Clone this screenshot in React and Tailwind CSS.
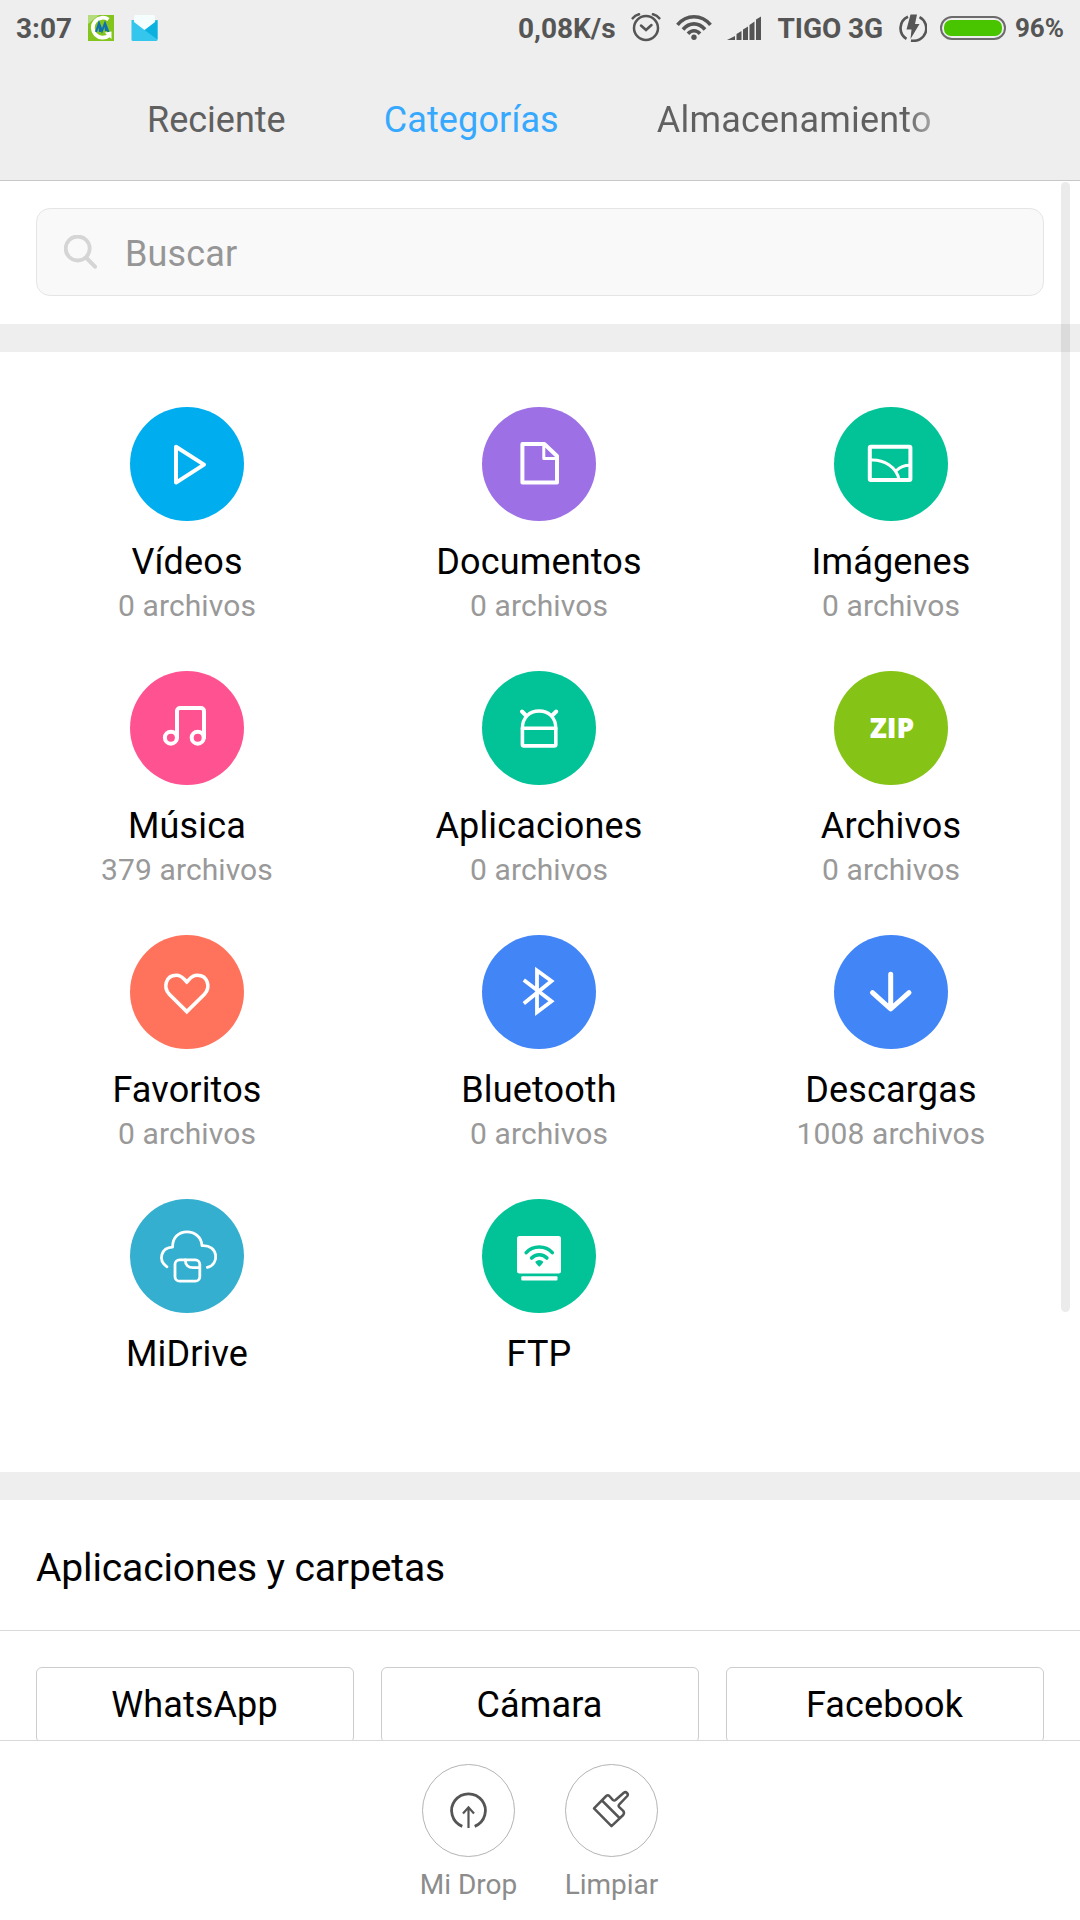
import React from 'react';

const categories = [
  { name: 'Vídeos', count: '0 archivos', color: 'bg-[#00aeef]', icon: 'video' },
  { name: 'Documentos', count: '0 archivos', color: 'bg-[#9d70e6]', icon: 'document' },
  { name: 'Imágenes', count: '0 archivos', color: 'bg-[#02c398]', icon: 'image' },
  { name: 'Música', count: '379 archivos', color: 'bg-[#ff5391]', icon: 'music' },
  { name: 'Aplicaciones', count: '0 archivos', color: 'bg-[#02c398]', icon: 'app' },
  { name: 'Archivos', count: '0 archivos', color: 'bg-[#85c317]', icon: 'zip' },
  { name: 'Favoritos', count: '0 archivos', color: 'bg-[#ff735c]', icon: 'heart' },
  { name: 'Bluetooth', count: '0 archivos', color: 'bg-[#4185f7]', icon: 'bluetooth' },
  { name: 'Descargas', count: '1008 archivos', color: 'bg-[#4185f7]', icon: 'download' },
  { name: 'MiDrive', count: '', color: 'bg-[#35afcf]', icon: 'drive' },
  { name: 'FTP', count: '', color: 'bg-[#02c398]', icon: 'ftp' },
];

const folders = ['WhatsApp', 'Cámara', 'Facebook'];

const icons = {
  video: <path d="M46 39.8V75.6L74 57.6Z" />,
  document: (
    <>
      <path d="M40.4 37H62.3L75 49V75.4H40.4Z" />
      <path d="M61.8 37V51.6H75" strokeWidth="3" />
    </>
  ),
  image: (
    <>
      <rect x="35.8" y="39.7" width="40.6" height="33.2" rx="1" />
      <path d="M36 53C50 52 62.5 60 65 72.5M62.5 63.5C66 59.8 70 58.3 76 58.3" strokeWidth="3" />
    </>
  ),
  music: (
    <>
      <path d="M47 66.7V40A3 3 0 0 1 50 37H71A3 3 0 0 1 74 40V66.7" />
      <circle cx="40.9" cy="66.7" r="6" />
      <circle cx="67.7" cy="66.7" r="6" />
    </>
  ),
  app: (
    <>
      <path d="M40.4 57.3V73.4A1.5 1.5 0 0 0 41.9 74.9H72.3A1.5 1.5 0 0 0 73.8 73.4V57.3Z" strokeWidth="3.6" />
      <path d="M40.4 57.3C40.4 46.5 47.5 40 57.1 40S73.8 46.5 73.8 57.3" strokeWidth="3.4" />
      <path d="M40 40.5L44 44.5M74.2 40.5L70.2 44.5" />
    </>
  ),
  heart: (
    <path
      d="M56.8 76.6L39.3 59.3C33 52.5 35.5 40.4 46.3 40.3C51.8 40.3 53.5 43.5 56.8 47C60.2 43.5 61.8 40.3 67.3 40.3C78.2 40.4 80.7 52.5 74.4 59.3Z"
      strokeWidth="3.6"
      strokeLinejoin="miter"
    />
  ),
  bluetooth: (
    <path
      d="M41.8 45L69.5 66.2L55 77.2V35.5L69.5 46L41.8 68.5"
      strokeWidth="3.8"
      strokeLinecap="butt"
      strokeLinejoin="miter"
    />
  ),
  download: <path d="M56.7 39.3V73.5M38.5 57.7L56.7 74L75 57.7" strokeWidth="5" />,
  drive: (
    <g strokeWidth="2.8">
      <path d="M37 67.8C27.5 61.5 31 48.5 42.6 48.1C42.3 38.5 49 32.8 56.9 32.8C65 32.8 71.5 38.3 72 46.6C88.5 45.5 90 65.5 77.3 68.4" />
      <rect x="45" y="60.8" width="24.8" height="21.4" rx="4.5" />
      <path d="M55.3 61C55.3 66 58.5 68.7 63 68.7H69.5" />
    </g>
  ),
  ftp: (
    <g stroke="none">
      <rect x="35" y="37" width="44" height="37.5" rx="2.5" fill="white" />
      <rect x="39.3" y="77.2" width="36.2" height="4.2" rx="1" fill="white" />
      <g stroke="#02c398" strokeWidth="3.6">
        <path d="M44.2 53.6C51 46.2 63.5 46.2 70.3 53.6" />
        <path d="M49.6 59C53.5 54.7 61 54.7 64.9 59" />
      </g>
      <path d="M53.3 62.8Q57.3 59 61.3 62.8Q61 64.5 57.3 67.7Q53.5 64.5 53.3 62.8Z" fill="#02c398" />
    </g>
  ),
};

const CategoryIcon = ({ icon }) => {
  if (icon === 'zip') {
    return (
      <span className="pb-0.5 pl-0.5 font-['Open_Sans',sans-serif] text-[28px] leading-[38px] font-extrabold text-white">
        ZIP
      </span>
    );
  }
  return (
    <svg
      className="size-[114px]"
      viewBox="0 0 114 114"
      fill="none"
      stroke="white"
      strokeWidth="4"
      strokeLinecap="round"
      strokeLinejoin="round"
    >
      {icons[icon]}
    </svg>
  );
};

const StatusBar = () => (
  <div className="flex h-[56px] items-center px-[16px] text-[28px] font-bold text-[#555555]">
    <span className="w-[72px] pt-[2px]">3:07</span>
    <svg className="h-[26px] w-[26px] shrink-0" viewBox="0 0 26 26">
      <rect width="26" height="26" fill="#83c41d" />
      <path d="M0 0H11L0 9Z" fill="#b5dc7c" />
      <path d="M20.5 4.5A10 10 0 1 0 21 20.5" fill="none" stroke="white" strokeWidth="3.8" />
      <path d="M16.5 17.5L23.5 16.5V24Z" fill="white" />
      <path d="M8 17L11 8L14 16L17 8L20.5 17M11 8L12 17M17 8L18 16" fill="none" stroke="#0c70b5" strokeWidth="2" />
    </svg>
    <svg className="ml-[17px] h-[26px] w-[27px] shrink-0" viewBox="0 0 27 26">
      <path d="M0.5 5H26.5V24.5Q26.5 26 25 26H2Q0.5 26 0.5 24.5Z" fill="#34c6ec" />
      <path d="M26.5 5V24.5L13.5 15Z" fill="#0ab1df" />
      <path d="M3 2Q3 0 5 0H22Q24 0 24 2V7L13.5 15L3 7Z" fill="#f5feff" />
    </svg>
    <div className="grow" />
    <span className="pt-[2px]">0,08K/s</span>
    <svg className="ml-[15px] h-[30px] w-[30px] shrink-0" viewBox="0 0 30 30" fill="none" stroke="#555555" strokeLinecap="round">
      <circle cx="15" cy="15" r="12" strokeWidth="2.5" />
      <path d="M10 12.5L15 17L20.5 12" strokeWidth="2.5" />
      <path d="M1.7 5.3Q4 2.3 8 1.3M28.3 5.3Q26 2.3 22 1.3" strokeWidth="2.6" />
    </svg>
    <svg className="ml-[15px] h-[28px] w-[36px] shrink-0" viewBox="0 0 36 28" fill="none" stroke="#555555" strokeWidth="3.6">
      <path d="M1.5 10.8C10.5 0 25.5 0 34.5 10.8" />
      <path d="M7 15.5C13.5 8 22.5 8 29 15.5" />
      <path d="M12 19.8C15.500 15.800 20.500 15.800 24 19.8" />
      <circle cx="18" cy="23.3" r="2.7" fill="#555555" stroke="none" />
    </svg>
    <svg className="ml-[15px] h-[24px] w-[34px] shrink-0" viewBox="0 0 34 24" fill="#555555">
      <path d="M0 24L8 20V24ZM9.5 18L14.5 15V24H9.5ZM16 13.5L21 10.5V24H16ZM22.5 9L27.5 5.5V24H22.5ZM29 3.5L34 0.5V24H29Z" />
    </svg>
    <span className="ml-[17px] pt-[2px] tracking-[-0.1px]">TIGO 3G</span>
    <svg className="ml-[16px] h-[28px] w-[28px] shrink-0" viewBox="0 0 28 28" fill="none" stroke="#555555" strokeWidth="2.6">
      <path d="M9 2.7A12.5 12.5 0 0 0 7.5 24.8" />
      <path d="M20.5 3.2A12.5 12.5 0 0 1 12 26.5" />
      <path d="M11.5 0.5H18L16 10H20.5L11.5 25L12.5 15.5H7.5Z" fill="#555555" stroke="none" />
    </svg>
    <div className="ml-[13px] h-[24px] w-[66px] shrink-0 rounded-full border-2 border-[#6b6b6b] p-[2px]">
      <div className="h-full rounded-[7px] bg-[#49c500]" />
    </div>
    <span className="ml-[9px] pt-px text-[26px]">96%</span>
  </div>
);

const Header = () => (
  <header className="h-[181px] border-b border-[#c8c8c8] bg-[#eeeeee]">
    <StatusBar />
    <nav className="flex h-[124px] gap-[98px] pt-[43px] pl-[147px] text-[36px] leading-[42px] text-[#606060]">
      <span>Reciente</span>
      <span className="tracking-[0.12px] text-[#36a9ff]">Categorías</span>
      <span className="bg-gradient-to-r from-[#606060] from-90% to-[#a8a8a8] bg-clip-text tracking-[0.2px] text-transparent">
        Almacenamiento
      </span>
    </nav>
  </header>
);

const SearchBox = () => (
  <div className="px-[36px] pt-[27px] pb-[28px]">
    <div className="flex h-[88px] items-center rounded-[14px] border border-[#e5e5e5] bg-[#f9f9f9] pl-[27px]">
      <svg className="mb-px size-[34px]" viewBox="0 0 34 34" fill="none" stroke="#d5d5d5" strokeWidth="3.8">
        <circle cx="13.7" cy="13.5" r="12" />
        <path d="M22 22.5L31 31.7" strokeWidth="4" strokeLinecap="round" />
      </svg>
      <span className="pt-[3px] pl-[27px] text-[36px] leading-[42px] tracking-[0.15px] text-[#969696]">Buscar</span>
    </div>
  </div>
);

const App = () => {
  return (
    <div className="relative flex h-[1920px] w-[1080px] flex-col overflow-hidden bg-white font-[Roboto,sans-serif] text-black">
      <Header />

      <main className="min-h-0 grow overflow-hidden">
        <SearchBox />
        <div className="h-[28px] bg-[#eeeeee]" />

        <div className="grid h-[1120px] auto-rows-[264px] grid-cols-3 pt-[55px] pr-[13px] pl-[11px]">
          {categories.map((item) => (
            <div key={item.name} className="flex flex-col items-center">
              <div className={`flex size-[114px] items-center justify-center rounded-full ${item.color}`}>
                <CategoryIcon icon={item.icon} />
              </div>
              <p className="mt-[20px] text-[36px] leading-[42px] tracking-[0.15px]">{item.name}</p>
              <p className="mt-[5px] text-[30px] leading-[36px] tracking-[0.1px] text-[#999999]">{item.count}</p>
            </div>
          ))}
        </div>

        <div className="h-[28px] bg-[#eeeeee]" />
        <h2 className="h-[131px] border-b border-[#d9d9d9] pt-[44px] pl-[36px] text-[39px] leading-[48px] tracking-[-0.12px]">
          Aplicaciones y carpetas
        </h2>
        <div className="grid grid-cols-3 gap-[27px] px-[36px] pt-[36px]">
          {folders.map((name) => (
            <div
              key={name}
              className="flex h-[76px] items-center justify-center rounded-[6px] border border-[#cccccc] pr-px text-[36px] tracking-[0.1px]"
            >
              {name}
            </div>
          ))}
        </div>
      </main>

      <footer className="flex h-[180px] shrink-0 justify-center gap-[44px] border-t border-[#d9d9d9] bg-white pt-[23px] text-[28px] text-[#8c8c8c]">
        <div className="flex w-[99px] flex-col items-center">
          <svg className="size-[93px] rounded-full border border-[#b4b4b4]" viewBox="1 1 91 91" fill="none" stroke="#555555" strokeWidth="2.8">
            <path d="M40.3 62.4A16.9 16.9 0 1 1 52.7 62.4" />
            <path d="M46.5 43V64M41 49.5L46.5 43.3L52 49.5" strokeWidth="2.2" />
          </svg>
          <span className="mt-[11px] leading-[34px] whitespace-nowrap">Mi Drop</span>
        </div>
        <div className="flex w-[99px] flex-col items-center">
          <svg
            className="size-[93px] rounded-full border border-[#b4b4b4]"
            viewBox="1 1 91 91"
            fill="none"
            stroke="#555555"
            strokeWidth="2.5"
            strokeLinejoin="round"
          >
            <path d="M29 44.3L41.2 32Q42.8 30.5 44.3 32L47.8 35.8Q49.3 37.2 50.8 35.8L58.8 28.7Q60.5 27.5 62 29T62.3 32L54.3 40.3Q53 41.8 54.3 43.2L58.2 46.8Q59.8 49 58.2 51L46.5 62.2Z" />
            <path d="M37 36.5L54.5 54" />
          </svg>
          <span className="mt-[11px] leading-[34px]">Limpiar</span>
        </div>
      </footer>

      {/* scrollbar thumb over the content */}
      <div className="absolute top-[182px] right-[10px] h-[1130px] w-[9px] rounded-full bg-black/8" />
    </div>
  );
};

export default App;
